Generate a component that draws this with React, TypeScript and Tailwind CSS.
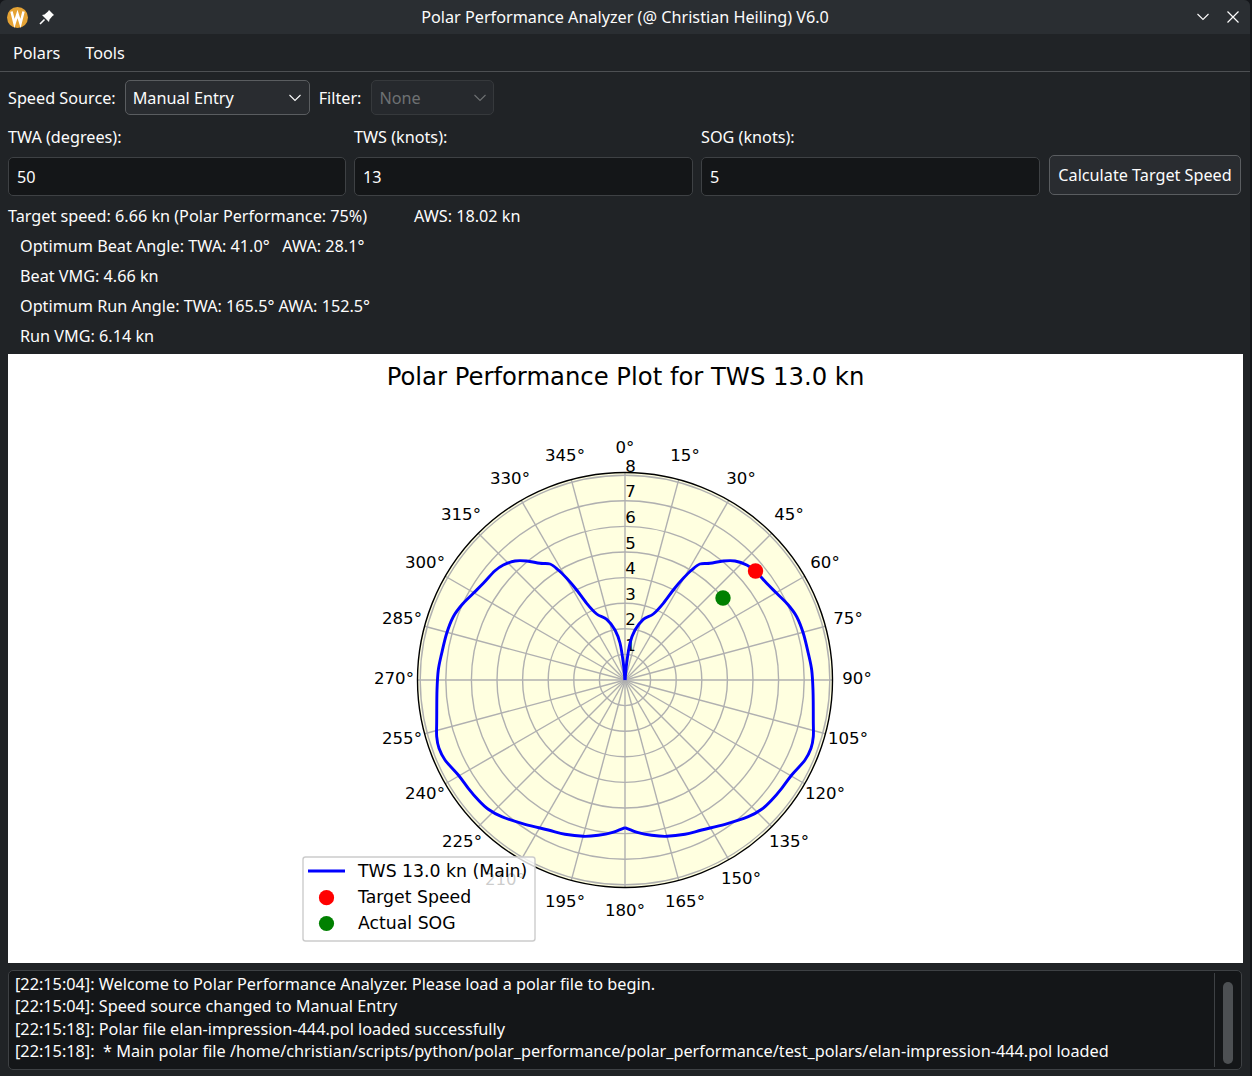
import React from "react"

const CX = 625
const CY = 680
const UNIT = 25.6

// right half of the speed curve, in page pixels
const halfCurve: [number, number][] = [
  [625, 680], [626.7, 663], [630, 643], [635, 630], [643.3, 619.3], [653.3, 614], [663.3, 603.3], [673.3, 590],
  [683.3, 578.3], [691.7, 570], [700, 564], [710, 563.3], [723.3, 561], [735, 561], [746.7, 565], [755.3, 571],
  [766.7, 583.3], [776.7, 593.3], [788.3, 605], [796.7, 616.7], [803.3, 633.3], [808.3, 653.3], [811.7, 670],
  [813, 690], [813.3, 720], [813.3, 736.7], [811, 748.3], [805, 760], [791.7, 775], [781.7, 788.3], [771.7, 800],
  [761.7, 809.3], [748.3, 816.7], [725, 824.3], [701.7, 830], [685, 834.3], [666.7, 836.3], [651.7, 835.3],
  [638.3, 832.7], [625, 827.7],
]

function smooth(points: [number, number][]) {
  let d = `M${points[0][0]} ${points[0][1]}`
  for (let i = 0; i < points.length - 1; i++) {
    const p0 = points[Math.max(i - 1, 0)]
    const p1 = points[i]
    const p2 = points[i + 1]
    const p3 = points[Math.min(i + 2, points.length - 1)]
    const c1x = p1[0] + (p2[0] - p0[0]) / 6
    const c1y = p1[1] + (p2[1] - p0[1]) / 6
    const c2x = p2[0] - (p3[0] - p1[0]) / 6
    const c2y = p2[1] - (p3[1] - p1[1]) / 6
    d += ` C${c1x.toFixed(1)} ${c1y.toFixed(1)} ${c2x.toFixed(1)} ${c2y.toFixed(1)} ${p2[0]} ${p2[1]}`
  }
  return d
}

const angleLabels: [string, number, number][] = [
  ["0°", 625, 447], ["15°", 685, 455], ["30°", 741, 478], ["45°", 789, 514], ["60°", 825, 562], ["75°", 848, 618],
  ["90°", 857, 678], ["105°", 848, 738], ["120°", 825, 793], ["135°", 789, 841], ["150°", 741, 878], ["165°", 685, 901],
  ["180°", 625, 910], ["195°", 565, 901], ["225°", 462, 841], ["240°", 425, 793], ["255°", 402, 738], ["270°", 394, 678],
  ["285°", 402, 618], ["300°", 425, 562], ["315°", 461, 514], ["330°", 510, 478], ["345°", 565, 455],
]

const plotFont = { fontFamily: "'DejaVu Sans', sans-serif" }

function PolarPlot() {
  const spokes = Array.from({ length: 24 }, (_, i) => (i * 15 * Math.PI) / 180)
  return (
    <svg width="1235" height="609" viewBox="8 354 1235 609" className="block" style={plotFont}>
      <rect x="8" y="354" width="1235" height="609" fill="#ffffff" />
      <text x="625.5" y="385" fontSize="24.3" textAnchor="middle" fill="#000">
        Polar Performance Plot for TWS 13.0 kn
      </text>

      <circle cx={CX} cy={CY} r="207.5" fill="#ffffe0" />
      {spokes.map((a, i) => (
        <line
          key={i}
          x1={CX}
          y1={CY}
          x2={CX + 207.5 * Math.sin(a)}
          y2={CY - 207.5 * Math.cos(a)}
          stroke="#b0b0b0"
          strokeWidth="1.4"
        />
      ))}
      {[1, 2, 3, 4, 5, 6, 7, 8].map((r) => (
        <circle key={r} cx={CX} cy={CY} r={r * UNIT} fill="none" stroke="#b0b0b0" strokeWidth="1.4" />
      ))}
      <circle cx={CX} cy={CY} r="207.5" fill="none" stroke="#000" strokeWidth="1.4" />

      {[1, 2, 3, 4, 5, 6, 7, 8].map((r) => (
        <text key={r} x="630.5" y={CY - r * UNIT - 3.5} fontSize="16.6" textAnchor="middle" fill="#000">
          {r}
        </text>
      ))}

      <path d={smooth(halfCurve)} fill="none" stroke="#0000ff" strokeWidth="2.9" strokeLinejoin="round" />
      <path
        d={smooth(halfCurve.map(([x, y]) => [2 * CX - x, y] as [number, number]))}
        fill="none"
        stroke="#0000ff"
        strokeWidth="2.9"
        strokeLinejoin="round"
      />
      <circle cx="755.5" cy="571" r="7.7" fill="#ff0000" />
      <circle cx="723" cy="598" r="7.7" fill="#008000" />

      {angleLabels.map(([t, x, y]) => (
        <text key={t} x={x} y={y + 6} fontSize="16.6" textAnchor="middle" fill="#000">
          {t}
        </text>
      ))}
      <text x="505" y="885" fontSize="16.6" textAnchor="middle" fill="#000">
        210°
      </text>

      <rect x="303" y="857" width="232" height="84" rx="2.5" fill="#ffffff" fillOpacity="0.8" stroke="#cccccc" strokeWidth="1.4" />
      <line x1="308" y1="871" x2="345" y2="871" stroke="#0000ff" strokeWidth="2.9" />
      <circle cx="326.5" cy="897.7" r="7.6" fill="#ff0000" />
      <circle cx="326.5" cy="923.5" r="7.6" fill="#008000" />
      <text x="358" y="877" fontSize="17.3" fill="#000">TWS 13.0 kn (Main)</text>
      <text x="358" y="903" fontSize="17.3" fill="#000">Target Speed</text>
      <text x="358" y="929" fontSize="17.3" fill="#000">Actual SOG</text>
    </svg>
  )
}

function Chevron({ className }: { className: string }) {
  return (
    <svg width="14" height="8" viewBox="0 0 14 8" className={className}>
      <path d="M1.5 1 L7 6.5 L12.5 1" fill="none" stroke="currentColor" strokeWidth="1.1" />
    </svg>
  )
}

function Field({ value, className }: { value: string; className: string }) {
  return (
    <div className={`flex h-[39px] items-center rounded-[5px] border border-[#3e4144] bg-[#141618] px-[8px] pt-[1px] ${className}`}>
      {value}
    </div>
  )
}

export default function App() {
  return (
    <div className="h-[1076px] w-[1252px] overflow-hidden bg-[#14161a]">
      <div
        className="flex h-[1076px] w-[1250px] flex-col overflow-hidden rounded-t-[6px] bg-[#202326] text-[16.22px] text-[#fcfcfc]"
        style={{ fontFamily: "'Noto Sans', sans-serif" }}
      >
        <div className="relative flex h-[34px] shrink-0 items-center bg-[#2a2e32] pl-[7px] pr-[10px]">
          <svg width="21" height="21" viewBox="0 0 21 21">
            <circle cx="10.5" cy="10.5" r="10.5" fill="#e5a335" />
            <path d="M4.5 4.5 L7.5 16.5 L10.5 7 L13.5 16.5 L16.5 4.5" fill="none" stroke="#ffffff" strokeWidth="2.5" />
          </svg>
          <svg width="16" height="16" viewBox="0 0 16 16" className="ml-[11px]">
            <path d="M10 1 L15 6 L13.5 7 L10.5 10.5 L10 13 L3 6 L5.5 5.5 L9 2.5 Z" fill="#fcfcfc" />
            <path d="M5.5 10.5 L1 15" fill="none" stroke="#fcfcfc" strokeWidth="1.6" />
          </svg>
          <div className="absolute inset-x-0 top-0 flex h-[34px] items-center justify-center">
            Polar Performance Analyzer (@ Christian Heiling) V6.0
          </div>
          <div className="ml-auto flex items-center gap-[16px]">
            <Chevron className="text-[#fcfcfc]" />
            <svg width="14" height="14" viewBox="0 0 14 14">
              <path d="M1.5 1.5 L12.5 12.5 M12.5 1.5 L1.5 12.5" fill="none" stroke="#fcfcfc" strokeWidth="1.2" />
            </svg>
          </div>
        </div>

        <div className="flex h-[38px] shrink-0 items-center gap-[25px] border-b border-[#4d5053] pl-[13px] pt-[1px]">
          <span>Polars</span>
          <span>Tools</span>
        </div>

        <div className="flex shrink-0 flex-col px-[8px]">
          <div className="mt-[8px] flex h-[35px] items-center">
            <span className="pt-[1px]">Speed Source:</span>
            <div className="ml-[9px] flex h-[35px] w-[185px] items-center justify-between rounded-[5px] border border-[#5a5d60] bg-[#292c30] px-[7px] pt-[1px]">
              Manual Entry
              <Chevron className="text-[#fcfcfc]" />
            </div>
            <span className="ml-[9px] pt-[1px]">Filter:</span>
            <div className="ml-[10px] flex h-[35px] w-[123px] items-center justify-between rounded-[5px] border border-[#36393c] bg-[#26292d] pl-[7px] pr-[6px] pt-[1px] text-[#6e7173]">
              None
              <Chevron className="text-[#6e7173]" />
            </div>
          </div>

          <div className="mt-[11px] flex h-[22px] items-center">
            <span className="w-[346px]">TWA (degrees):</span>
            <span className="w-[347px]">TWS (knots):</span>
            <span>SOG (knots):</span>
          </div>

          <div className="mt-[9px] flex items-start gap-[8px]">
            <Field value="50" className="w-[338px]" />
            <Field value="13" className="w-[339px]" />
            <Field value="5" className="w-[339px]" />
            <div className="-mt-[2px] ml-[1px] flex h-[40px] w-[192px] items-center justify-center rounded-[5px] border border-[#5a5d60] bg-[#292c30]">
              Calculate Target Speed
            </div>
          </div>

          <div className="mt-[5px] flex h-[30px] items-center">
            <span className="w-[406px]">Target speed: 6.66 kn (Polar Performance: 75%)</span>
            <span>AWS: 18.02 kn</span>
          </div>
          <div className="flex h-[30px] items-center whitespace-pre pl-[12px]">Optimum Beat Angle: TWA: 41.0°   AWA: 28.1°</div>
          <div className="flex h-[30px] items-center pl-[12px]">Beat VMG: 4.66 kn</div>
          <div className="flex h-[30px] items-center pl-[12px]">Optimum Run Angle: TWA: 165.5° AWA: 152.5°</div>
          <div className="flex h-[30px] items-center pl-[12px]">Run VMG: 6.14 kn</div>
        </div>

        <div className="ml-[8px] mt-[3px] h-[609px] w-[1235px] shrink-0">
          <PolarPlot />
        </div>

        <div className="ml-[8px] mt-[7px] flex h-[100px] w-[1234px] shrink-0 rounded-[5px] border border-[#3e4144] bg-[#141618]">
          <div className="flex-1 whitespace-pre pl-[6px] pt-[2px] text-[16.25px] leading-[22.3px]">
            <div>[22:15:04]: Welcome to Polar Performance Analyzer. Please load a polar file to begin.</div>
            <div>[22:15:04]: Speed source changed to Manual Entry</div>
            <div>[22:15:18]: Polar file elan-impression-444.pol loaded successfully</div>
            <div>[22:15:18]:  * Main polar file /home/christian/scripts/python/polar_performance/polar_performance/test_polars/elan-impression-444.pol loaded</div>
          </div>
          <div className="my-[2px] flex w-[27px] justify-center border-l border-[#3e4144] pb-[3px] pt-[9px]">
            <div className="w-[10px] rounded-full bg-[#4d5053]" />
          </div>
        </div>
      </div>
    </div>
  )
}
